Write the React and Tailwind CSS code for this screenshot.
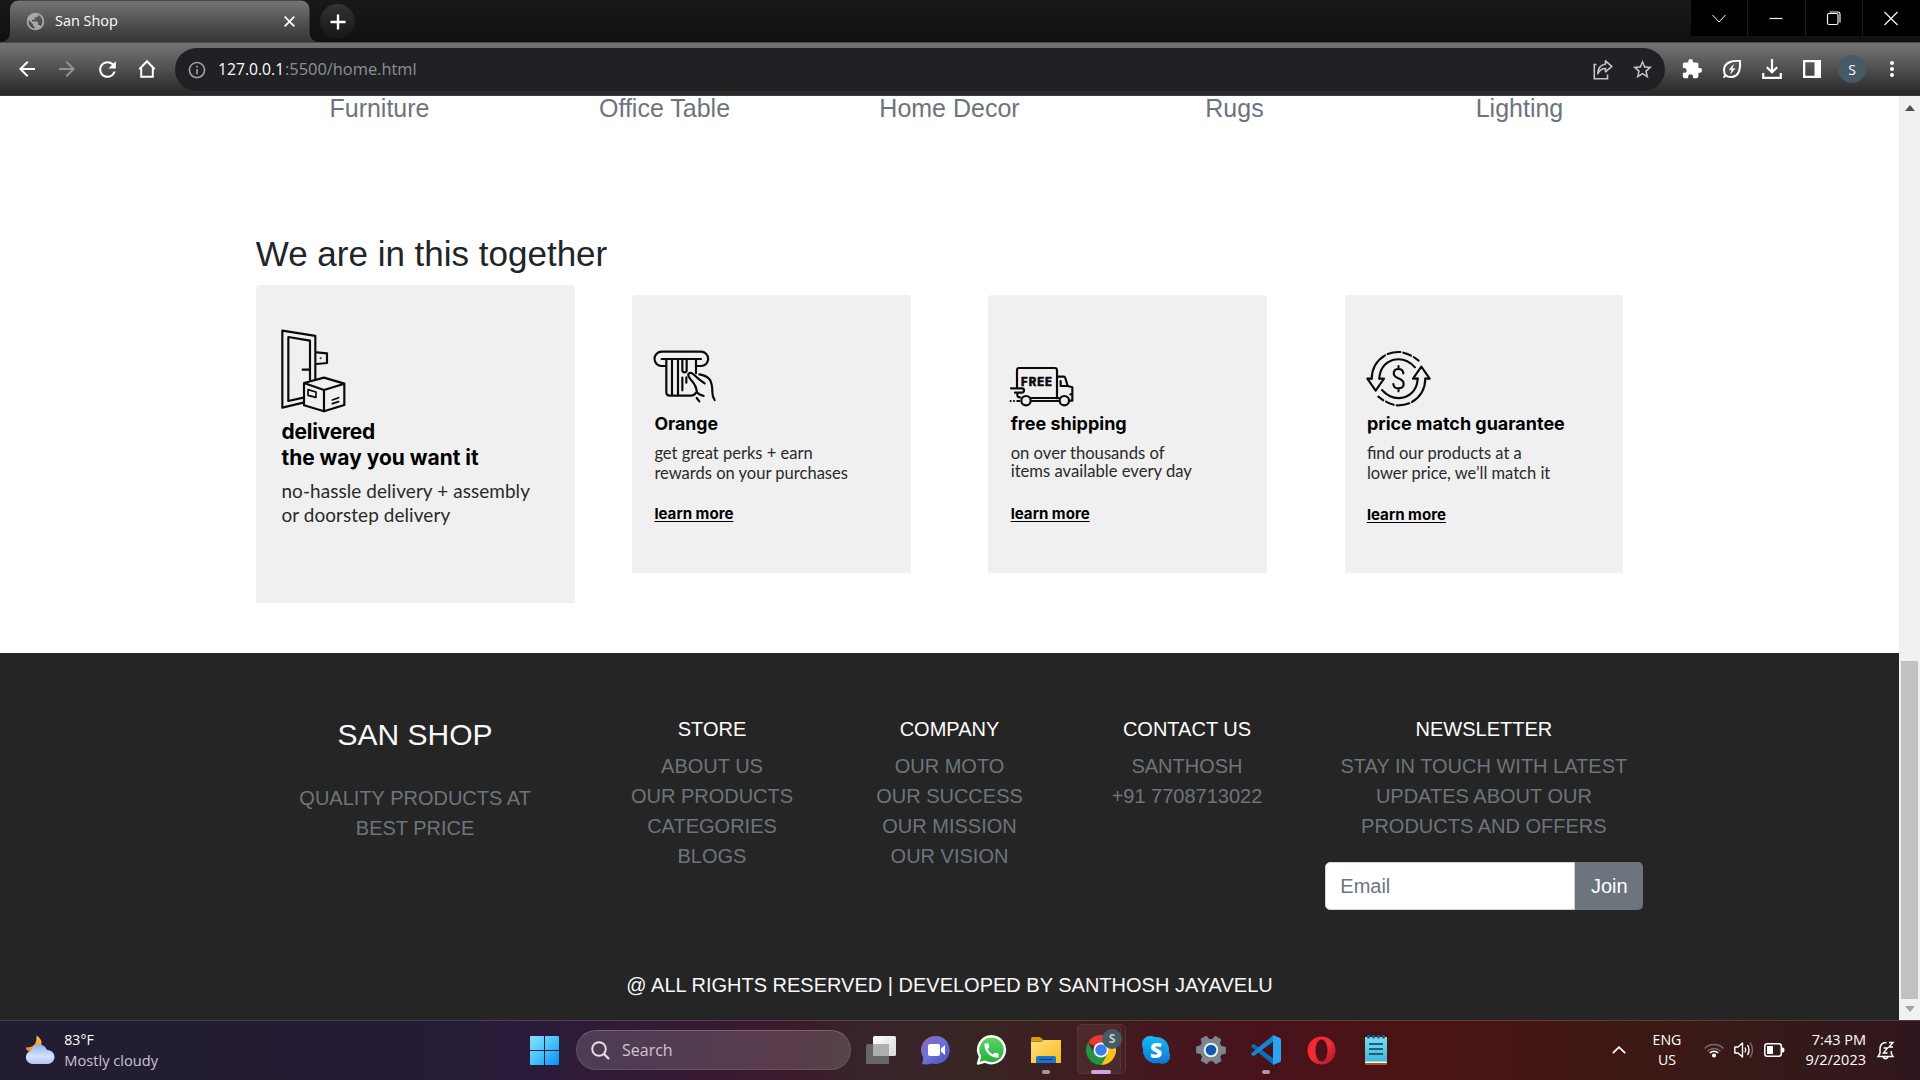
import React from "react";
import {
  MdArrowBack,
  MdArrowForward,
  MdRefresh,
  MdInfoOutline,
  MdStarBorder,
  MdExtension,
  MdMoreVert,
  MdPublic,
  MdCall,
} from "react-icons/md";

/* ---------- browser chrome ---------- */

function TabStrip() {
  return (
    <div className="flex h-[42px] justify-between bg-linear-to-b from-[#191919] to-[#101010]">
      <div className="flex">
        <div className="relative ml-[10px] h-[42px] w-[300px]">
          <svg className="absolute -left-[9px] top-0" width="318" height="42" viewBox="0 0 318 42">
            <defs>
              <linearGradient id="tab" x1="0" y1="0" x2="0" y2="1">
                <stop offset="0" stopColor="#757575" />
                <stop offset="0.5" stopColor="#535353" />
                <stop offset="1" stopColor="#363636" />
              </linearGradient>
            </defs>
            <path d="M0 42q9-1 9-10V10q0-9.500 9.500-9.500H299q9.500 0 9.500 9.500V32q0 9 9 10Z" fill="url(#tab)" />
          </svg>
          <div className="relative flex h-full items-center pl-[15px]">
            <MdPublic className="size-[21px] text-[#a3a9af]" />
            <span className="ml-[9px] w-[229px] text-[14.45px] text-white">San Shop</span>
            <svg width="11" height="11" viewBox="0 0 11 11" stroke="#fff" strokeWidth="1.700">
              <path d="M.7.7l9.600 9.600M10.300.7L.7 10.300" />
            </svg>
          </div>
        </div>
        <div className="ml-[10px] mt-[4px] flex size-[35px] items-center justify-center rounded-full bg-linear-to-b from-[#333] to-[#161616]">
          <svg width="16" height="16" viewBox="0 0 16 16" stroke="#fff" strokeWidth="2.400">
            <path d="M8 .5v15M.5 8h15" />
          </svg>
        </div>
      </div>
      <div className="flex h-[36px] divide-x divide-[#1c1c1c] bg-black">
        <WinButton>
          <path d="M5.500 9L12 16l6.500-7" strokeWidth="1" />
        </WinButton>
        <WinButton>
          <path d="M5.500 12.500h13" />
        </WinButton>
        <WinButton>
          <rect x="5.500" y="7.500" width="10.500" height="11" rx="1.500" />
          <path d="M7.500 6h8.500q2 0 2 2.500V16.500" />
        </WinButton>
        <WinButton>
          <path d="M5.500 6l13 13M18.500 6l-13 13" />
        </WinButton>
      </div>
    </div>
  );
}

function WinButton({ children }) {
  return (
    <div className="flex w-[57.250px] items-center justify-center">
      <svg width="24" height="24" viewBox="0 0 24 24" fill="none" stroke="#f4f4f4" strokeWidth="1.200">
        {children}
      </svg>
    </div>
  );
}

function Slot({ children }) {
  return <div className="flex w-[40px] shrink-0 items-center justify-center text-white">{children}</div>;
}

function Toolbar() {
  return (
    <div className="flex h-[54px] items-center border-t border-b border-t-[#4c4c4c] border-b-[#3b3b3b] bg-linear-to-b from-[#757575] via-[#505050] to-[#272727] pl-[7px]">
      <Slot>
        <MdArrowBack className="size-[24px]" />
      </Slot>
      <Slot>
        <MdArrowForward className="size-[24px] text-[#929292]" />
      </Slot>
      <Slot>
        <MdRefresh className="size-[25px]" />
      </Slot>
      <Slot>
        <svg width="20" height="20" viewBox="0 0 20 20" fill="none" stroke="#fff" strokeWidth="2">
          <path d="M2.300 10.200L10 2.300l7.700 7.900M4.200 9V17.800H15.800V9" />
        </svg>
      </Slot>
      <div className="ml-[8px] mt-[1px] flex h-[43px] w-[1490px] items-center rounded-full bg-[#202124] pl-[12px]">
        <MdInfoOutline className="size-[20px] text-[#9aa0a6]" />
        <div className="ml-[11px] flex flex-1 items-baseline text-[16.400px]">
          <span className="w-[67px] text-[15.700px] text-white">127.0.0.1</span>
          <span className="text-[#8c9095]">:5500/home.html</span>
        </div>
        <svg className="mr-[18.500px]" width="20" height="21" viewBox="0 0 20 21" fill="none" stroke="#c3c5c8" strokeWidth="1.600">
          <path d="M3.500 5.500H1.300V19.700H14.500V15.500" />
          <path d="M12.500 1.800L18.800 7.300l-6.300 5.500V9.500Q7.500 9.200 4.800 14.700 5.200 6.200 12.500 5Z" strokeLinejoin="round" />
        </svg>
        <MdStarBorder className="mr-[11px] size-[23px] text-[#c3c5c8]" />
      </div>
      <div className="ml-[7px] flex">
        <Slot>
          <MdExtension className="size-[22px]" />
        </Slot>
        <Slot>
          <svg width="20" height="20" viewBox="0 0 20 20" fill="none" stroke="#fff" strokeWidth="2">
            <path d="M1.500 18.500L4 16M18 2q-6-.5-10 1Q2 5.500 2 11q0 7 7 7 5.500 0 8-5.500Q18.600 8 18 2Z" />
            <path d="M11.500 5.500L7 10.800h2.800L8.500 15l4.700-5.400h-2.900Z" fill="#fff" strokeWidth=".4" />
          </svg>
        </Slot>
        <Slot>
          <svg width="20" height="20" viewBox="0 0 20 20" fill="none" stroke="#fff" strokeWidth="2.200">
            <path d="M10 0v13M4.800 8.200L10 13.200l5.200-5M1.200 14v4.800H18.800V14" />
          </svg>
        </Slot>
        <Slot>
          <svg width="18" height="18" viewBox="0 0 18 18" fill="#fff">
            <path d="M0 0h18v18H0ZM2.300 2.300v13.400H11.500V2.300Z" fillRule="evenodd" />
          </svg>
        </Slot>
        <Slot>
          <div className="flex size-[28px] items-center justify-center rounded-full bg-[#455a64] text-[14px]">S</div>
        </Slot>
        <Slot>
          <MdMoreVert className="size-[24px]" />
        </Slot>
      </div>
    </div>
  );
}

/* ---------- page ---------- */

const categories = ["Furniture", "Office Table", "Home Decor", "Rugs", "Lighting"];

function DoorIcon() {
  return (
    <svg width="66.660" height="86.660" viewBox="120 325 200 260" fill="none" stroke="#0a0a0a" strokeWidth="6.500" strokeLinejoin="round" strokeLinecap="round">
      <path d="M190 549L127 564V333L226 348.500V478" />
      <path d="M190 534L145 544V352L210 363V480" />
      <path d="M188 450h20M230 398l31 3v29l-31 3" />
      <circle cx="242" cy="416" r="1" strokeWidth="4" />
      <path d="M192 490l60-16 61 18-61 19Zv67l60 18V511M252 575l61-19V492" />
      <path d="M204 510l24 7v16l-24-6ZM277 541l19-7M277 552l19-6" strokeWidth="5" />
    </svg>
  );
}

function CardSlotIcon() {
  return (
    <svg width="70" height="60" viewBox="96 204 210 180" fill="none" stroke="#0a0a0a" strokeWidth="6.500" strokeLinejoin="round" strokeLinecap="round">
      <path d="M136 258H125a21.500 21.500 0 0 1 0-43H243a21.500 21.500 0 0 1 0 43h-11" />
      <path d="M125 237H243M139 237V337q0 10 10 10h64q9 0 14-8M156 237V346M174 237V346M228 237V280" />
      <path d="M187 237v34q0 6 6.500 6t6.500-6V237M187 293v38M199 292v16" />
      <path d="M254 310q-20-13-34-27-8-8-15-1-2 6 9 19 15 16 17 37 7 6 20 10M238 283q21 3 31 15 8 12 8 38 0 14 7 24M230 354l8 10" />
    </svg>
  );
}

function TruckIcon() {
  return (
    <svg width="70" height="60" viewBox="114 204 210 180" fill="none" stroke="#0a0a0a" strokeWidth="6.500" strokeLinejoin="round" strokeLinecap="round">
      <path d="M141 322V270q0-6 6-6H254q7 0 7 7v84" />
      <path d="M263 290h18q4 0 5 4l7 24 14 4v40h-8M272 303v15h18M301 343h6" />
      <path d="M123 325h33q6 0 6 6 0 7-7 7H135M142 340v5q0 7 8 7M122 363h.1M132 363h.1M142 363h6" />
      <circle cx="168" cy="362" r="14" />
      <circle cx="283" cy="362" r="14" />
      <path d="M184 354h82M186 363h80" />
      <text x="153" y="317" textLength="93" lengthAdjust="spacing" fill="#0a0a0a" strokeWidth="1.500" className="font-['Inter'] text-[34px] font-extrabold">
        FREE
      </text>
    </svg>
  );
}

function PriceHalf() {
  return (
    <g>
      <path d="M125 296H112l25 36 25-36H148" />
      <path d="M125 296Q126 250 165 226M173 222q18-7 38-6M220 218q13 3 23 9M251 231l15 11" />
      <path d="M148 296Q150 254 188 240 226 230 255 262" />
    </g>
  );
}

function PriceIcon() {
  return (
    <svg width="70" height="60" viewBox="105 204 210 180" fill="none" stroke="#0a0a0a" strokeWidth="6.300" strokeLinejoin="round" strokeLinecap="round">
      <PriceHalf />
      <g transform="rotate(180 205.500 296)">
        <PriceHalf />
      </g>
      <path d="M220 280q-1-13-15-13-13 0-14 13 0 9 14 15 16 6 16 17 0 13-16 13-14 0-15-13M205.500 258v9M205.500 325v9" />
    </svg>
  );
}

function PromoCard({ icon, title, titleClass, lines, linesClass, moreClass }) {
  return (
    <div className="mx-[20px] mt-[10px] h-[278px] rounded-t-[4px] bg-[#f0f0f0] pt-[53px]">
      <div className="ml-[20px] h-[60px]">{icon}</div>
      <div className="ml-[22.400px] whitespace-nowrap text-black">
        <div className={"mt-[4px] h-[24px] font-['Inter'] font-bold leading-[24px] " + titleClass}>{title}</div>
        <div className={"font-['Lato'] text-[#2a2a2a] " + linesClass}>
          {lines.map((l) => (
            <div key={l}>{l}</div>
          ))}
        </div>
        <div className={"font-['Inter'] text-[15.100px] font-bold leading-[20px] underline decoration-1 underline-offset-2 " + moreClass}>
          learn more
        </div>
      </div>
    </div>
  );
}

function FooterCol({ title, lines, children }) {
  return (
    <div className="px-[18.750px]">
      <h6 className="mb-[10px] text-[20px] leading-[24px] text-white">{title}</h6>
      {lines.map((l) => (
        <p key={l} className="whitespace-nowrap text-[20px] leading-[30px] text-[#6c757d]">
          {l}
        </p>
      ))}
      {children}
    </div>
  );
}

function Page() {
  return (
    <div className="flex h-[924px] w-[1899px] flex-col overflow-hidden bg-white font-['Liberation_Sans',Arial,sans-serif]">
      <div className="mx-auto grid w-[1425px] grid-cols-5 text-center text-[25px] leading-[25px] text-[#6c757d]">
        {categories.map((c) => (
          <div key={c}>{c}</div>
        ))}
      </div>

      <section className="mx-auto mt-[112px] w-[1425px]">
        <h3 className="mb-[10px] px-[18.750px] text-[35px] leading-[42px] text-[#212529]">We are in this together</h3>
        <div className="grid grid-cols-4">
          <div className="px-[18.750px]">
            <div className="h-[318px] rounded-t-[4px] bg-[#f0f0f0] pt-[43.300px]">
              <div className="ml-[24px] h-[86.700px]">
                <DoorIcon />
              </div>
              <div className="ml-[25.700px] whitespace-nowrap">
                <div className="mt-[4.500px] font-['Inter'] text-[20.950px] font-bold leading-[26px] text-black">
                  <div className="tracking-[-0.2px]">delivered</div>
                  <div>the way you want it</div>
                </div>
                <div className="mt-[7.500px] font-['Lato'] text-[18.950px] leading-[24px] tracking-[0.080px] text-[#2a2a2a]">
                  <div>no-hassle delivery + assembly</div>
                  <div>or doorstep delivery</div>
                </div>
              </div>
            </div>
          </div>
          <div className="px-[18.750px]">
            <PromoCard
              icon={<CardSlotIcon />}
              title="Orange"
              titleClass="text-[17.700px]"
              lines={["get great perks + earn", "rewards on your purchases"]}
              linesClass="mt-[7px] text-[16.550px] leading-[20px]"
              moreClass="mt-[20.500px]"
            />
          </div>
          <div className="px-[18.750px]">
            <PromoCard
              icon={<TruckIcon />}
              title="free shipping"
              titleClass="text-[18px]"
              lines={["on over thousands of", "items available every day"]}
              linesClass="mt-[8px] text-[16.650px] leading-[18px]"
              moreClass="mt-[23.500px]"
            />
          </div>
          <div className="px-[18.750px]">
            <PromoCard
              icon={<PriceIcon />}
              title="price match guarantee"
              titleClass="text-[17.980px]"
              lines={["find our products at a", "lower price, we’ll match it"]}
              linesClass="mt-[7px] text-[16.500px] leading-[20px]"
              moreClass="mt-[21.500px]"
            />
          </div>
        </div>
      </section>

      <footer className="mt-[50px] flex-1 bg-[#252525] pt-[64px] text-center">
        <div className="mx-auto grid w-[1425px] grid-cols-[3fr_2fr_2fr_2fr_3fr]">
          <div className="px-[18.750px]">
            <h4 className="text-[30px] leading-[36px] text-[#f8f9fa]">SAN SHOP</h4>
            <p className="mt-[30px] text-[20px] leading-[30px] text-[#6c757d]">
              QUALITY PRODUCTS AT
              <br />
              BEST PRICE
            </p>
          </div>
          <FooterCol title="STORE" lines={["ABOUT US", "OUR PRODUCTS", "CATEGORIES", "BLOGS"]} />
          <FooterCol title="COMPANY" lines={["OUR MOTO", "OUR SUCCESS", "OUR MISSION", "OUR VISION"]} />
          <FooterCol title="CONTACT US" lines={["SANTHOSH", "+91 7708713022"]} />
          <FooterCol title="NEWSLETTER" lines={["STAY IN TOUCH WITH LATEST", "UPDATES ABOUT OUR", "PRODUCTS AND OFFERS"]}>
            <div className="mt-[21px] flex h-[48px] text-[20px]">
              <div className="flex min-w-0 flex-1 items-center rounded-l-[5px] border border-[#ced4da] bg-white pl-[14.800px] text-[#6c757d]">
                Email
              </div>
              <div className="flex w-[68px] items-center justify-center rounded-r-[5px] bg-[#6c757d] text-white">Join</div>
            </div>
          </FooterCol>
        </div>
        <p className="mt-[63px] text-[20px] leading-[24px] text-[#f8f9fa]">@ ALL RIGHTS RESERVED | DEVELOPED BY SANTHOSH JAYAVELU</p>
      </footer>
    </div>
  );
}

function Scrollbar() {
  return (
    <div className="flex h-[924px] w-[21px] flex-col items-center bg-[#f1f1f1] pt-[9px]">
      <svg width="10" height="6" viewBox="0 0 10 6">
        <path d="M5 0l5 6H0Z" fill="#505050" />
      </svg>
      <div className="mt-[550px] h-[338px] w-[17px] bg-[#c1c1c1]" />
      <svg className="mt-[7px]" width="10" height="6" viewBox="0 0 10 6">
        <path d="M5 6l5-6H0Z" fill="#a3a3a3" />
      </svg>
    </div>
  );
}

/* ---------- taskbar ---------- */

function WeatherIcon() {
  return (
    <svg width="30" height="30" viewBox="0 0 30 30">
      <defs>
        <linearGradient id="moon" x1="0" y1="0" x2="0" y2="1">
          <stop offset="0" stopColor="#f5c53c" />
          <stop offset="1" stopColor="#f08a1d" />
        </linearGradient>
        <linearGradient id="cloud" x1="0" y1="0" x2="0" y2="1">
          <stop offset="0" stopColor="#8fb2f4" />
          <stop offset="0.6" stopColor="#d4e1fb" />
          <stop offset="1" stopColor="#b3c7f1" />
        </linearGradient>
      </defs>
      <path d="M11.500.5q6 3.500 5 10-2.500 7-9.500 7-4.500-.5-6.500-5Q12.500 13 11.500.5Z" fill="url(#moon)" />
      <path d="M7 29a6.700 6.700 0 0 1-1-13.200A8.500 8.500 0 0 1 22 15a7 7 0 0 1 1 14Z" fill="url(#cloud)" />
    </svg>
  );
}

function AppSlot({ children, dot }) {
  return (
    <div className="relative flex h-[60px] w-[55px] shrink-0 items-center justify-center">
      {children}
      {dot && <span className="absolute bottom-[6px] left-[23.500px] h-[4px] w-[8px] rounded-full bg-[#a99a9b]" />}
    </div>
  );
}

function TaskbarApps() {
  return (
    <div className="flex">
      <AppSlot>
        <svg width="30" height="28" viewBox="0 0 30 28">
          <defs>
            <linearGradient id="tv" x1="0" y1="0" x2="1" y2="1">
              <stop offset="0" stopColor="#fff" />
              <stop offset="1" stopColor="#d9d9d9" />
            </linearGradient>
          </defs>
          <rect x="0" y="8" width="23" height="20" rx="1.500" fill="#666" />
          <rect x="7" y="0" width="23" height="20" rx="1.500" fill="url(#tv)" />
          <rect x="7" y="8" width="16" height="12" fill="#b1adac" />
        </svg>
      </AppSlot>
      <AppSlot>
        <svg width="30" height="30" viewBox="0 0 30 30">
          <defs>
            <linearGradient id="chat" x1="0" y1="0" x2="1" y2="1">
              <stop offset="0" stopColor="#9b5fb4" />
              <stop offset="0.45" stopColor="#6a74d8" />
              <stop offset="1" stopColor="#4f4fc4" />
            </linearGradient>
          </defs>
          <path d="M15 1a14 14 0 1 1-4 27.500Q6 30 1 29q1.500-4 1-7A14 14 0 0 1 15 1Z" fill="url(#chat)" />
          <rect x="7" y="9" width="12" height="12" rx="2" fill="#fff" />
          <path d="M20 13.500L24 10v10l-4-3.500Z" fill="#fff" />
        </svg>
      </AppSlot>
      <AppSlot>
        <div className="relative flex size-[32px] items-center justify-center">
          <svg className="absolute inset-0" width="32" height="32" viewBox="0 0 32 32">
            <defs>
              <linearGradient id="wa" x1="0" y1="0" x2="0" y2="1">
                <stop offset="0" stopColor="#60d669" />
                <stop offset="1" stopColor="#20b038" />
              </linearGradient>
            </defs>
            <path d="M16.500 2.200a13.500 13.500 0 1 1-6.300 25.500L3 29.500l2-7A13.500 13.500 0 0 1 16.500 2.200Z" fill="url(#wa)" stroke="#fff" strokeWidth="2.400" strokeLinejoin="round" />
          </svg>
          <MdCall className="relative size-[19px] text-white" />
        </div>
      </AppSlot>
      <AppSlot dot>
        <svg width="30" height="27" viewBox="0 0 30 27">
          <defs>
            <linearGradient id="fold" x1="0" y1="0" x2="1" y2="1">
              <stop offset="0" stopColor="#ffe07a" />
              <stop offset="1" stopColor="#f8b923" />
            </linearGradient>
          </defs>
          <path d="M0 1.500Q0 0 1.500 0H9l4 4H0Z" fill="#dd9a0a" />
          <path d="M0 4.500h10.500L13 3h17v23H0Z" fill="url(#fold)" />
          <path d="M5 26V21q0-2 2-2H23q2 0 2 2v5Z" fill="#1976cc" />
          <path d="M8.500 22.500h13" stroke="#0c3f83" strokeWidth="1.300" />
        </svg>
      </AppSlot>
      <AppSlot>
        <div className="absolute left-[3px] top-[4px] h-[50px] w-[49px] rounded-[5px] border border-[#5d3235] bg-[#472024]" />
        <div className="absolute left-[3px] top-[4px] h-[50px] w-[44px] rounded-[5px] border border-[#5d3235] bg-[#4b2a2b]" />
        <svg className="relative" width="30" height="30" viewBox="0 0 30 30">
          <path d="M15 15L2 7.500A15 15 0 0 1 28 7.500H15Z" fill="#e33b2e" />
          <path d="M28 7.500A15 15 0 0 1 15 30l6.500-11.200L15 7.500Z" fill="#fbc116" />
          <path d="M2 7.500A15 15 0 0 0 15 30l6.500-11.300-13 0Z" fill="#229342" />
          <circle cx="15" cy="15" r="7.500" fill="#fff" />
          <circle cx="15" cy="15" r="5.800" fill="#3b7ced" />
        </svg>
        <span className="absolute left-[28.500px] top-[9px] flex size-[20px] items-center justify-center rounded-full bg-[#455a64] text-[12px] font-bold text-[#c3cacd]">
          S
        </span>
        <span className="absolute bottom-[6px] left-[17.500px] h-[4px] w-[20px] rounded-full bg-[#d8a0e6]" />
      </AppSlot>
      <AppSlot>
        <div className="relative flex size-[28px] items-center justify-center">
          <svg className="absolute inset-0" width="28" height="28" viewBox="0 0 28 28">
            <defs>
              <linearGradient id="sk" x1="0" y1="0" x2="0" y2="1">
                <stop offset="0" stopColor="#19b8f5" />
                <stop offset="1" stopColor="#0a78d4" />
              </linearGradient>
            </defs>
            <path d="M8 0q3 0 5 1a13 13 0 0 1 14 15q1 2 1 4.500A7.500 7.500 0 0 1 17 27 13 13 0 0 1 1 13Q0 11 0 8A8 8 0 0 1 8 0Z" fill="url(#sk)" />
          </svg>
          <span className="relative text-[21px] font-extrabold leading-none text-white">S</span>
        </div>
      </AppSlot>
      <AppSlot>
        <svg width="30" height="30" viewBox="0 0 30 30">
          <path
            d="M12 1h6l1 4 3 1.800L26 5.500l3 5-3 3v3l3 3-3 5-4-1.300L19 25l-1 4h-6l-1-4-3-1.800L4 24.500l-3-5 3-3v-3l-3-3 3-5 4 1.300L11 5Z"
            fill="#7d858d"
            stroke="#7d858d"
            strokeLinejoin="round"
            transform="rotate(30 15 15)"
          />
          <circle cx="15" cy="15" r="7.300" fill="#eceff1" />
          <circle cx="15" cy="15" r="5.300" fill="#0d5cab" />
        </svg>
      </AppSlot>
      <AppSlot dot>
        <svg width="30" height="30" viewBox="0 0 30 30">
          <path d="M0 11l2.500-2.300 20 15V30L0.500 12Z" fill="#0a6ebd" />
          <path d="M0 19l2.500 2.300 20-15V0L.5 18Z" fill="#1487d4" />
          <path d="M22 0l7 3q1 .5 1 1.500V25.500q0 1-1 1.500l-7 3Z" fill="#27a5f2" />
        </svg>
      </AppSlot>
      <AppSlot>
        <svg width="29" height="29" viewBox="0 0 29 29">
          <defs>
            <linearGradient id="op" x1="0" y1="0" x2="1" y2="1">
              <stop offset="0" stopColor="#ff1b2d" />
              <stop offset="0.5" stopColor="#f03036" />
              <stop offset="1" stopColor="#b01020" />
            </linearGradient>
          </defs>
          <path d="M14.500.5a14 14 0 1 1 0 28 14 14 0 0 1 0-28ZM14.500 3.500C10.800 3.500 8.500 8.500 8.500 14.500s2.300 11 6 11 6-5 6-11-2.300-11-6-11Z" fill="url(#op)" fillRule="evenodd" />
        </svg>
      </AppSlot>
      <AppSlot>
        <svg width="22" height="30" viewBox="0 0 22 30">
          <defs>
            <linearGradient id="np" x1="0" y1="0" x2="0" y2="1">
              <stop offset="0" stopColor="#7ddcf2" />
              <stop offset="1" stopColor="#3db8da" />
            </linearGradient>
          </defs>
          <rect x="0" y="26" width="22" height="4" rx="1" fill="#a8581d" />
          <rect x="0" y="2" width="22" height="26" fill="#f3f3f3" />
          <rect x="0" y="2" width="22" height="24.500" fill="url(#np)" />
          <path d="M4 9h14M4 14h14M4 19h14" stroke="#1c6079" strokeWidth="1.800" />
          <path d="M3.500 0v3.500M8.500 0v3.500M13.500 0v3.500M18.500 0v3.500" stroke="#17638a" strokeWidth="2.600" />
        </svg>
      </AppSlot>
    </div>
  );
}

function Tray() {
  return (
    <div className="ml-[208px] flex items-center text-white">
      <svg width="14" height="8" viewBox="0 0 14 8" fill="none" stroke="#fff" strokeWidth="1.800">
        <path d="M.8 7.200L7 1.200l6.200 6" />
      </svg>
      <div className="-mt-[1px] ml-[21.500px] w-[40px] text-center text-[14.200px] leading-[20px]">
        <div>ENG</div>
        <div>US</div>
      </div>
      <svg className="ml-[16.500px]" width="20" height="16" viewBox="0 0 20 16" fill="none" stroke="#fff" strokeWidth="1.500">
        <path d="M.7 6.500a13 13 0 0 1 18.600 0M3.500 9.300a9.200 9.200 0 0 1 13 0" opacity=".35" />
        <path d="M5.800 11a6 6 0 0 1 8.400 0" />
        <circle cx="10" cy="13.500" r="1.300" fill="#fff" />
      </svg>
      <svg className="ml-[10px]" width="20" height="18" viewBox="0 0 20 18" fill="none" stroke="#fff" strokeWidth="1.400">
        <path d="M.8 6H4l4.500-4v14L4 12H.8Z" strokeLinejoin="round" />
        <path d="M11 6.500q1.500 2.500 0 5M13.500 4q3 5 0 10" />
        <path d="M16 1.500q5 7.500 0 15" opacity=".35" />
      </svg>
      <svg className="ml-[10px]" width="21" height="14" viewBox="0 0 21 14">
        <rect x=".8" y=".8" width="16.500" height="12.400" rx="2.500" fill="none" stroke="#fff" strokeWidth="1.500" />
        <rect x="3" y="3" width="6" height="8" fill="#fff" />
        <path d="M18 4.500h1q1.500 0 1.500 2.500T19 9.500h-1Z" fill="#fff" />
      </svg>
      <div className="-mt-[1px] ml-[11.500px] w-[70px] text-right text-[14.500px] leading-[20px]">
        <div>7:43 PM</div>
        <div>9/2/2023</div>
      </div>
      <svg className="ml-[10.500px]" width="18" height="19" viewBox="0 0 18 19" fill="none" stroke="#fff" strokeWidth="1.500">
        <path d="M9.500 1.500Q3 1.500 3 8v4L1 15.500H16L14.300 12.500V10M6 16q2.500 3.500 5 0" />
        <path d="M6.500 7h4L6.500 12h4M12 1.500h4L12 6h4" strokeWidth="1.400" />
      </svg>
    </div>
  );
}

function Taskbar() {
  return (
    <div className="flex h-[60px] items-center border-t border-white/15 bg-[linear-gradient(90deg,#231d33_0px,#231c34_400px,#2a1b3a_540px,#361a33_680px,#3b1a2c_790px,#38232a_860px,#382522_980px,#43181f_1140px,#48121c_1260px,#4a1414_1420px,#3f1712_1600px,#361a18_1740px,#30171d_1920px)] pb-[1px]">
      <div className="flex w-[530px] items-center pl-[25px]">
        <WeatherIcon />
        <div className="-mt-[1px] ml-[9.300px] text-[14.650px] leading-[20px]">
          <div className="text-[14.100px] text-white">83°F</div>
          <div className="text-[#c9c4cc]">Mostly cloudy</div>
        </div>
      </div>
      <svg width="29" height="29" viewBox="0 0 29 29">
        <defs>
          <linearGradient id="win" x1="0" y1="0" x2="1" y2="1">
            <stop offset="0" stopColor="#8adfff" />
            <stop offset="0.45" stopColor="#4cc8fb" />
            <stop offset="1" stopColor="#0a90f7" />
          </linearGradient>
        </defs>
        <path d="M1 0H14V14H0V1Q0 0 1 0ZM15 0H28Q29 0 29 1V14H15ZM0 15H14V29H1Q0 29 0 28ZM15 15H29V28Q29 29 28 29H15Z" fill="url(#win)" />
      </svg>
      <div className="ml-[17px] flex h-[40px] w-[275px] items-center rounded-full border border-white/10 border-t-white/20 bg-white/15 pl-[14px]">
        <svg width="19" height="19" viewBox="0 0 19 19" fill="none" stroke="#e8e3ea" strokeWidth="1.900">
          <circle cx="8" cy="8" r="6.800" />
          <path d="M12.800 12.800L18 18" strokeWidth="2.300" />
        </svg>
        <span className="ml-[12px] text-[16px] text-[#cfc6d0]">Search</span>
      </div>
      <div className="ml-[2.500px]">
        <TaskbarApps />
      </div>
      <Tray />
    </div>
  );
}

export default function App() {
  return (
    <div className="h-[1080px] w-[1920px] overflow-hidden bg-white font-['Open_Sans','Noto_Sans',sans-serif]">
      <TabStrip />
      <Toolbar />
      <div className="flex">
        <Page />
        <Scrollbar />
      </div>
      <Taskbar />
    </div>
  );
}
